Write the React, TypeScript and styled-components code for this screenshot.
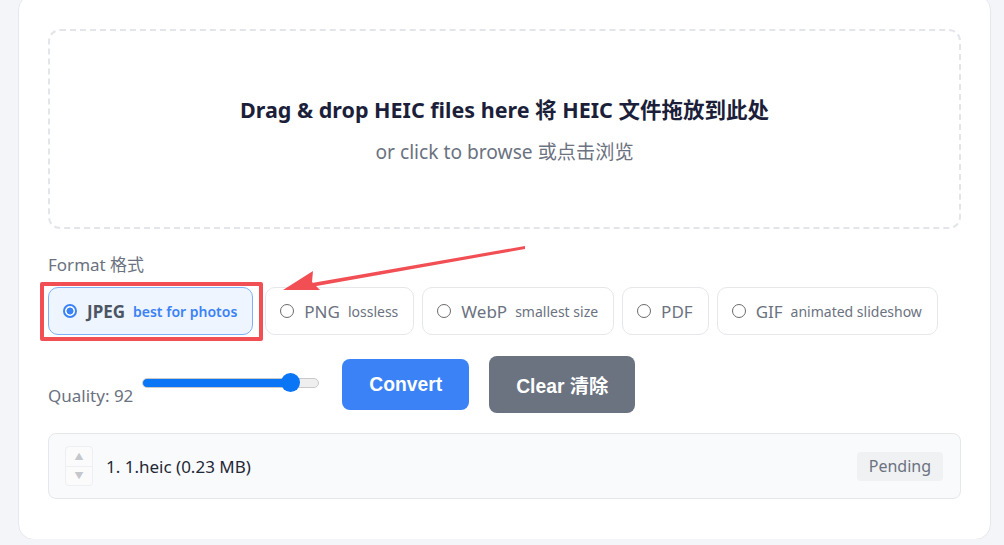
import React, { useState } from 'react'
import styled, { createGlobalStyle } from 'styled-components'

const GlobalStyle = createGlobalStyle`
  html, body {
    margin: 0;
    padding: 0;
    background: #f4f5f9;
    overflow: hidden;
  }
  body {
    font-family: 'Noto Sans', 'Noto Sans CJK SC', sans-serif;
  }
`

const Page = styled.div`
  position: relative;
  width: 1004px;
  height: 545px;
  padding: 0 13px 0 18px;
  box-sizing: border-box;
`

const Card = styled.div`
  margin-top: -6px;
  background: #fff;
  border: 1px solid #e6e8ee;
  border-radius: 16px;
  padding: 34px 29px 40px 29px;
`

const DropZone = styled.div`
  height: 200px;
  box-sizing: border-box;
  border: 2px dashed #e3e5ea;
  border-radius: 12px;
  display: flex;
  flex-direction: column;
  align-items: center;
  justify-content: center;
  gap: 15px;
  cursor: pointer;
`

const DropTitle = styled.div`
  font-size: 21.5px;
  font-weight: 700;
  color: #1c1f3a;
  line-height: 28px;
  margin-top: 2px;
`

const DropHint = styled.div`
  font-size: 19.2px;
  color: #6b7280;
  line-height: 26px;
`

const FieldLabel = styled.div`
  margin-top: 25px;
  font-size: 17px;
  line-height: 22px;
  color: #6b7280;
`

const Options = styled.div`
  margin-top: 11px;
  display: flex;
  gap: 8px;
`

const OptionWrap = styled.div<{ $marked?: boolean }>`
  position: relative;
  display: flex;
  margin-right: ${p => (p.$marked ? '4px' : '0')};
`

const Option = styled.label<{ $active?: boolean }>`
  height: 48px;
  box-sizing: border-box;
  display: flex;
  align-items: center;
  padding: 0 15px 0 14px;
  border: 1px solid ${p => (p.$active ? '#7fb0f7' : '#e5e7eb')};
  background: ${p => (p.$active ? '#eef5ff' : '#fff')};
  border-radius: 10px;
  cursor: pointer;
`

const Radio = styled.span<{ $checked?: boolean }>`
  width: 14px;
  height: 14px;
  box-sizing: border-box;
  border-radius: 50%;
  border: ${p => (p.$checked ? '2px solid #3b82f6' : '1.5px solid #6b6b6b')};
  background: ${p => (p.$checked ? 'radial-gradient(circle, #3b82f6 0 3.2px, #fff 3.8px)' : '#fff')};
  margin-right: 10px;
  flex: none;
`

const OptName = styled.span<{ $active?: boolean }>`
  font-size: 17px;
  font-weight: ${p => (p.$active ? 700 : 400)};
  color: ${p => (p.$active ? '#4b5563' : '#6b7280')};
`

const OptNote = styled.span<{ $active?: boolean }>`
  font-size: 14px;
  margin-left: 8px;
  font-weight: ${p => (p.$active ? 600 : 400)};
  color: ${p => (p.$active ? '#3b82f6' : '#6b7280')};
`

const Highlight = styled.div`
  position: absolute;
  left: -8px;
  right: -10px;
  top: -5px;
  bottom: -6px;
  border: 4px solid #f24f55;
  border-radius: 2px;
  pointer-events: none;
`

const Controls = styled.div`
  margin-top: 21px;
  display: flex;
  align-items: center;
`

const QualityLabel = styled.span`
  font-size: 17px;
  color: #6b7280;
  margin-top: 22px;
  margin-right: 9px;
`

const Slider = styled.input`
  -webkit-appearance: none;
  appearance: none;
  width: 177px;
  height: 20px;
  margin: 0 23px 4px 0;
  background: transparent;
  cursor: pointer;

  &::-webkit-slider-runnable-track {
    height: 10px;
    border-radius: 5px;
    border: 1px solid #c9c9c9;
    box-sizing: border-box;
    background: linear-gradient(
      to right,
      #0a75f5 0,
      #0a75f5 var(--fill),
      #efefef var(--fill)
    );
  }
  &::-webkit-slider-thumb {
    -webkit-appearance: none;
    width: 19px;
    height: 19px;
    margin-top: -5.5px;
    border-radius: 50%;
    background: #0a75f5;
    border: none;
  }
`

const Button = styled.button<{ $tone: 'primary' | 'muted' }>`
  border: none;
  border-radius: 8px;
  color: #fff;
  font-family: 'Liberation Sans', 'Noto Sans CJK SC', sans-serif;
  font-weight: 700;
  font-size: 19.3px;
  cursor: pointer;
  background: ${p => (p.$tone === 'primary' ? '#3b82f6' : '#6b7280')};
  height: ${p => (p.$tone === 'primary' ? '51px' : '57px')};
  padding: 0 27px;
  margin-right: 20px;
`

const FileList = styled.div`
  margin-top: 20px;
  background: #f9fafb;
  border: 1px solid #e5e7eb;
  border-radius: 8px;
`

const FileRow = styled.div`
  height: 64px;
  display: flex;
  align-items: center;
  padding: 0 16px;
`

const Mover = styled.div`
  width: 28px;
  height: 40px;
  box-sizing: border-box;
  border: 1px solid #eeeff2;
  border-radius: 4px;
  background: #fbfbfc;
  display: flex;
  flex-direction: column;
  margin-right: 13px;
`

const MoveBtn = styled.span<{ $top?: boolean }>`
  flex: 1;
  display: flex;
  align-items: center;
  justify-content: center;
  font-size: 9px;
  color: #c4c7cc;
  border-bottom: ${p => (p.$top ? '1px solid #eeeff2' : 'none')};
`

const FileName = styled.span`
  flex: 1;
  font-size: 17px;
  color: #1f2937;
`

const Status = styled.span`
  background: #f0f1f3;
  color: #6b7280;
  font-size: 16px;
  border-radius: 4px;
  padding: 0 12px;
  height: 29px;
  line-height: 29px;
  margin-right: 1px;
`

const Annotation = styled.svg`
  position: absolute;
  left: 0;
  top: 0;
  pointer-events: none;
`

const formats = [
  { key: 'jpeg', name: 'JPEG', note: 'best for photos' },
  { key: 'png', name: 'PNG', note: 'lossless' },
  { key: 'webp', name: 'WebP', note: 'smallest size' },
  { key: 'pdf', name: 'PDF', note: '' },
  { key: 'gif', name: 'GIF', note: 'animated slideshow' },
]

const MIN_Q = 30
const MAX_Q = 100

const App = () => {
  const [format, setFormat] = useState('jpeg')
  const [quality, setQuality] = useState(92)
  const fill = ((quality - MIN_Q) / (MAX_Q - MIN_Q)) * 100

  return (
    <Page>
      <GlobalStyle />
      <Card>
        <DropZone>
          <DropTitle>Drag &amp; drop HEIC files here 将 HEIC 文件拖放到此处</DropTitle>
          <DropHint>or click to browse 或点击浏览</DropHint>
        </DropZone>

        <FieldLabel>Format 格式</FieldLabel>
        <Options>
          {formats.map(f => {
            const active = f.key === format
            return (
              <OptionWrap key={f.key} $marked={f.key === 'jpeg'}>
                <Option $active={active} onClick={() => setFormat(f.key)}>
                  <Radio $checked={active} />
                  <OptName $active={active}>{f.name}</OptName>
                  {f.note && <OptNote $active={active}>{f.note}</OptNote>}
                </Option>
                {f.key === 'jpeg' && <Highlight />}
              </OptionWrap>
            )
          })}
        </Options>

        <Controls>
          <QualityLabel>Quality: {quality}</QualityLabel>
          <Slider
            type='range'
            min={MIN_Q}
            max={MAX_Q}
            value={quality}
            onChange={e => setQuality(Number(e.target.value))}
            style={{ ['--fill' as string]: `${fill}%` }}
          />
          <Button $tone='primary'>Convert</Button>
          <Button $tone='muted'>Clear 清除</Button>
        </Controls>

        <FileList>
          <FileRow>
            <Mover>
              <MoveBtn $top>▲</MoveBtn>
              <MoveBtn>▼</MoveBtn>
            </Mover>
            <FileName>1. 1.heic (0.23 MB)</FileName>
            <Status>Pending</Status>
          </FileRow>
        </FileList>
      </Card>

      {/* red arrow pointing at the JPEG option */}
      <Annotation width='1004' height='545' viewBox='0 0 1004 545'>
        <path d='M525 252 L312 289 L311 293 L525 255 Z' fill='#f24f55' />
        <path d='M283 296 L313 277 L312 288 L320 296 Z' fill='#f24f55' />
      </Annotation>
    </Page>
  )
}

export default App
